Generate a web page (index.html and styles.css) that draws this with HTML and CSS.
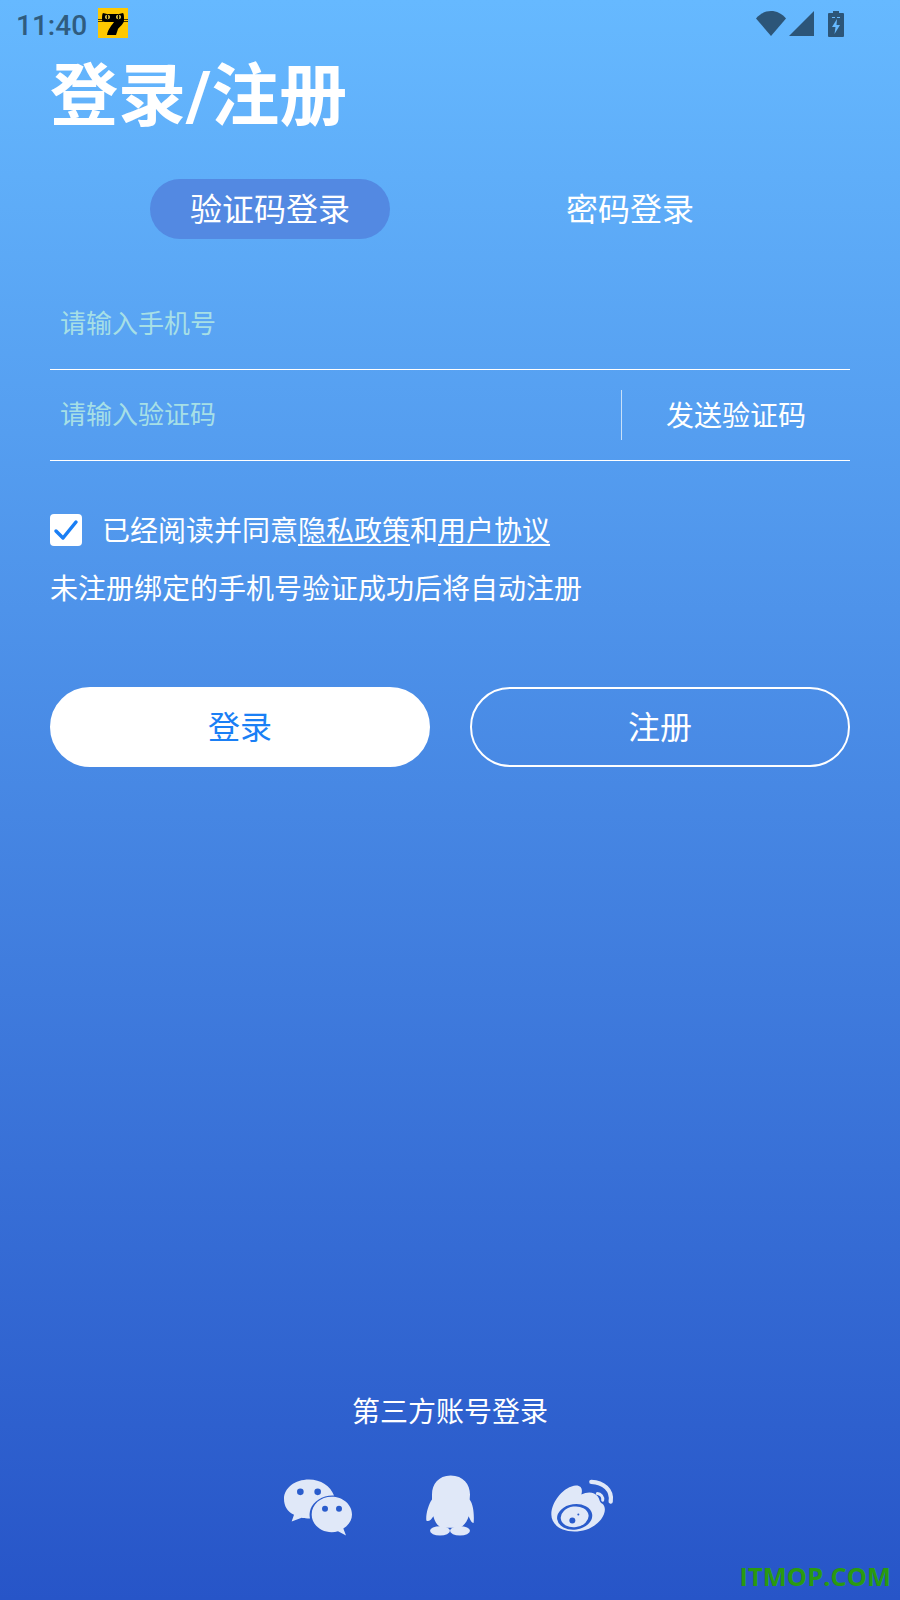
FILE: index.html
```html
<!DOCTYPE html>
<html lang="zh-CN">

<head>
    <meta charset="UTF-8">
    <meta name="viewport" content="width=device-width, initial-scale=1.0">
    <title>登录/注册</title>
    <link rel="stylesheet" href="styles.css">
</head>

<body>
    <div class="page">
        <div class="status-bar">
            <span class="time">11:40</span>
            <svg class="app-icon" viewBox="0 0 30 30">
                <rect width="30" height="30" fill="#ffc800" />
                <path d="M0 11.500h5M0 13.500h5M25 11.500h5M25 13.500h5" stroke="#000" stroke-width="0.700" />
                <path d="M4 12C4 9 4 6 5 5L9 6H21L25 5C26 6 26 9 26 12C26 16 22 18 20 21L18 27H9C10 21 14 17 16 14H7C5 14 4 13 4 12Z" fill="#000" />
                <ellipse cx="9.500" cy="9" rx="2.500" ry="2.200" fill="#ffe14d" />
                <ellipse cx="20.500" cy="9" rx="2.500" ry="2.200" fill="#ffe14d" />
                <ellipse cx="9.500" cy="9" rx="0.900" ry="2.200" fill="#000" />
                <ellipse cx="20.500" cy="9" rx="0.900" ry="2.200" fill="#000" />
            </svg>
            <div class="status-icons">
                <svg class="wifi" viewBox="0 0 30 25">
                    <path d="M0 7.500C8 -2.500 22 -2.500 30 7.500L15 25Z" fill="#2c5578" />
                </svg>
                <svg class="signal" viewBox="0 0 25 25">
                    <path d="M0 25L25 0V25Z" fill="#2c5578" />
                </svg>
                <svg class="battery" viewBox="0 0 16 26">
                    <path d="M5 0H11V2H15Q16 2 16 3V25Q16 26 15 26H1Q0 26 0 25V3Q0 2 1 2H5Z" fill="#2c5578" />
                    <path d="M9 8L4 16H7.500L6.500 23L12 14H8.500Z" fill="#66b9ff" />
                    <path d="M4 6H7V7H4ZM9 6H12V7H9Z" fill="#66b9ff" />
                </svg>
            </div>
        </div>

        <h1 class="title">登录/注册</h1>

        <div class="tabs">
            <div class="tab tab-active">验证码登录</div>
            <div class="tab">密码登录</div>
        </div>

        <div class="form">
            <div class="field">
                <span class="placeholder">请输入手机号</span>
            </div>
            <div class="field">
                <span class="placeholder">请输入验证码</span>
                <div class="send-code">发送验证码</div>
            </div>
        </div>

        <div class="agree">
            <span class="checkbox">
                <svg viewBox="0 0 32 32">
                    <path d="M6 17L13 24L26 8" fill="none" stroke="#1a7ff5" stroke-width="3.500" stroke-linecap="round" stroke-linejoin="round" />
                </svg>
            </span>
            <span class="agree-text">已经阅读并同意<span class="link">隐私政策</span>和<span class="link">用户协议</span></span>
        </div>
        <div class="tip">未注册绑定的手机号验证成功后将自动注册</div>

        <div class="buttons">
            <div class="btn btn-login">登录</div>
            <div class="btn btn-register">注册</div>
        </div>

        <div class="third">
            <div class="third-title">第三方账号登录</div>
            <div class="third-icons">
                <!-- wechat -->
                <svg class="third-icon" viewBox="54 38 240 200">
                    <path d="M147 60C105 60 72 85 72 118C72 140 82 156 102 166L95 186L125 175C133 177 140 177 150 177C148 168 148 160 152 148C160 125 190 106 222 108C212 80 182 60 147 60Z" fill="#e0e8f8" />
                    <path d="M215 112C182 112 155 135 155 165C155 195 182 218 215 218C222 218 228 217 234 215L258 228L250 207C266 197 276 182 276 165C276 135 248 112 215 112Z" fill="#e0e8f8" />
                    <circle cx="121" cy="97" r="10" fill="#2a5ccc" />
                    <circle cx="173" cy="97" r="10" fill="#2a5ccc" />
                    <circle cx="195" cy="148" r="9" fill="#2a5ccc" />
                    <circle cx="237" cy="148" r="9" fill="#2a5ccc" />
                </svg>
                <!-- qq -->
                <svg class="third-icon" viewBox="450 38 240 200">
                    <path d="M572 48C535 48 516 75 516 105L516 120C505 135 497 165 499 183C505 188 515 180 520 170C525 190 535 200 545 205H600C612 198 622 185 626 170C630 180 636 192 641 190C643 165 640 135 629 120L630 105C630 75 610 48 572 48Z" fill="#e0e8f8" />
                    <ellipse cx="540" cy="214" rx="30" ry="14" fill="#e0e8f8" />
                    <ellipse cx="600" cy="214" rx="30" ry="14" fill="#e0e8f8" />
                </svg>
                <!-- weibo -->
                <svg class="third-icon" viewBox="848 38 240 200">
                    <path d="M876 165C876 125 915 80 950 78C968 78 970 92 966 105C985 95 1005 97 1015 110C1022 120 1020 128 1028 132C1040 140 1040 160 1025 180C1005 205 975 216 945 216C905 216 876 195 876 165Z" fill="#e0e8f8" />
                    <ellipse cx="946" cy="172" rx="53" ry="38" transform="rotate(-8 946 172)" fill="#2a5ccc" />
                    <ellipse cx="946" cy="172" rx="42" ry="31" transform="rotate(-8 946 172)" fill="#e0e8f8" />
                    <circle cx="939" cy="183" r="9" fill="#2a5ccc" />
                    <circle cx="957" cy="165" r="3" fill="#2a5ccc" />
                    <path d="M996 67C1032 68 1060 92 1054 126" fill="none" stroke="#e0e8f8" stroke-width="13" stroke-linecap="round" />
                    <path d="M1014 102C1024 102 1032 112 1030 122" fill="none" stroke="#e0e8f8" stroke-width="9" stroke-linecap="round" />
                </svg>
            </div>
        </div>

        <div class="watermark">ITMOP.COM</div>
    </div>
</body>

</html>
```

FILE: styles.css
```css
* {
    box-sizing: border-box;
}

body {
    margin: 0;
    font-family: "Noto Sans CJK SC", "Noto Sans", sans-serif;
    color: #ffffff;
}

.page {
    position: relative;
    display: flex;
    flex-direction: column;
    height: 1600px;
    overflow: hidden;
    background: linear-gradient(180deg, #66b9ff 0%, #2755c8 100%);
}

/* status bar */
.status-bar {
    display: flex;
    align-items: center;
    height: 50px;
    padding-left: 16px;
}

.time {
    padding-top: 2px;
    font-family: Roboto, sans-serif;
    font-size: 28px;
    font-weight: 500;
    line-height: 50px;
    color: #2f5c80;
}

.app-icon {
    width: 30px;
    height: 30px;
    margin-left: 11px;
    margin-bottom: 4px;
}

.status-icons {
    display: flex;
    align-items: center;
    margin-left: auto;
    margin-right: 56px;
    margin-bottom: 3px;
}

.wifi {
    width: 30px;
    height: 25px;
}

.signal {
    width: 25px;
    height: 25px;
    margin-left: 3px;
}

.battery {
    width: 16px;
    height: 26px;
    margin-left: 14px;
}

/* title */
.title {
    margin: 0;
    padding-top: 6px;
    padding-left: 50px;
    font-family: Roboto, "Noto Sans CJK SC", sans-serif;
    font-size: 68px;
    font-weight: 700;
    line-height: 82px;
}

/* tabs */
.tabs {
    display: flex;
    gap: 120px;
    margin: 41px 0 0 100px;
}

.tab {
    width: 240px;
    height: 60px;
    font-size: 32px;
    line-height: 56px;
    text-align: center;
    border-radius: 30px;
}

.tab-active {
    margin-left: 50px;
    background-color: #5389e2;
}

/* form */
.form {
    margin: 40px 50px 0;
}

.field {
    display: flex;
    align-items: center;
    justify-content: space-between;
    height: 91px;
    padding-left: 10px;
    border-bottom: 1px solid #ffffff;
}

.placeholder {
    padding-bottom: 5px;
    font-size: 26px;
    color: #a6dfe6;
}

.send-code {
    width: 229px;
    height: 50px;
    font-size: 28px;
    line-height: 48px;
    text-align: center;
    border-left: 1px solid #c8e0f8;
}

/* agreement */
.agree {
    display: flex;
    align-items: center;
    gap: 20px;
    height: 36px;
    margin: 51px 50px 0;
    font-size: 28px;
    line-height: 34px;
}

.agree-text {
    padding-bottom: 2px;
}

.checkbox {
    display: block;
    width: 32px;
    height: 32px;
    background-color: #ffffff;
    border-radius: 4px;
}

.checkbox svg {
    display: block;
    width: 32px;
    height: 32px;
}

.link {
    text-decoration: underline;
    text-underline-offset: 3px;
}

.tip {
    margin: 21px 50px 0;
    font-size: 28px;
    line-height: 36px;
}

/* buttons */
.buttons {
    display: flex;
    gap: 40px;
    margin: 82px 50px 0;
}

.btn {
    flex: 1;
    height: 80px;
    font-size: 32px;
    line-height: 72px;
    text-align: center;
    border: 2px solid #ffffff;
    border-radius: 40px;
}

.btn-login {
    color: #1a7ff5;
    background-color: #ffffff;
}

/* third party */
.third {
    margin-top: auto;
    padding-bottom: 61px;
}

.third-title {
    font-size: 28px;
    line-height: 36px;
    text-align: center;
}

.third-icons {
    display: flex;
    justify-content: center;
    gap: 52px;
    margin-top: 44px;
}

.third-icon {
    display: block;
    width: 80px;
    height: 67px;
}

.watermark {
    position: absolute;
    right: 9px;
    bottom: 9px;
    font-family: "Open Sans", sans-serif;
    font-size: 25.500px;
    font-weight: 700;
    line-height: 30px;
    color: #2a9a10;
}
```
